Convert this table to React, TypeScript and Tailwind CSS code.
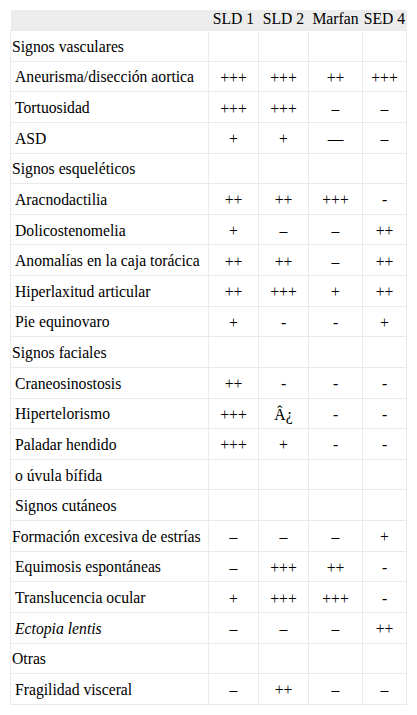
import React from "react";

type Row = { label: string; indent?: boolean; italic?: boolean; vals?: string[] };

const rows: Row[] = [
  { label: "Signos vasculares" },
  { label: "Aneurisma/disección aortica", indent: true, vals: ["+++", "+++", "++", "+++"] },
  { label: "Tortuosidad", indent: true, vals: ["+++", "+++", "–", "–"] },
  { label: "ASD", indent: true, vals: ["+", "+", "—", "–"] },
  { label: "Signos esqueléticos" },
  { label: "Aracnodactilia", indent: true, vals: ["++", "++", "+++", "-"] },
  { label: "Dolicostenomelia", indent: true, vals: ["+", "–", "–", "++"] },
  { label: "Anomalías en la caja torácica", indent: true, vals: ["++", "++", "–", "++"] },
  { label: "Hiperlaxitud articular", indent: true, vals: ["++", "+++", "+", "++"] },
  { label: "Pie equinovaro", indent: true, vals: ["+", "-", "-", "+"] },
  { label: "Signos faciales" },
  { label: "Craneosinostosis", indent: true, vals: ["++", "-", "-", "-"] },
  { label: "Hipertelorismo", indent: true, vals: ["+++", "Â¿", "-", "-"] },
  { label: "Paladar hendido", indent: true, vals: ["+++", "+", "-", "-"] },
  { label: "o úvula bífida", indent: true },
  { label: "Signos cutáneos", indent: true },
  { label: "Formación excesiva de estrías", vals: ["–", "–", "–", "+"] },
  { label: "Equimosis espontáneas", indent: true, vals: ["–", "+++", "++", "-"] },
  { label: "Translucencia ocular", indent: true, vals: ["+", "+++", "+++", "-"] },
  { label: "Ectopia lentis", indent: true, italic: true, vals: ["–", "–", "–", "++"] },
  { label: "Otras" },
  { label: "Fragilidad visceral", indent: true, vals: ["–", "++", "–", "–"] },
];

const serif = "font-['Liberation_Serif','Times_New_Roman',serif] text-[15.7px] text-black";

export default function App() {
  return (
    <div className={`bg-white min-h-[715px] pt-[10px] pl-[10px] ${serif}`}>
      <table className={`border-collapse table-fixed w-[396px] ${serif}`}>
        <colgroup>
          <col className="w-[198px]" />
          <col className="w-[50px]" />
          <col className="w-[50px]" />
          <col className="w-[54px]" />
          <col className="w-[44px]" />
        </colgroup>
        <thead>
          <tr className="bg-[#ececec] h-[20px]">
            <th className="p-0"></th>
            <th className={`pt-0 pb-[3px] px-0 font-normal text-center leading-[17px] whitespace-nowrap ${serif}`}>SLD 1</th>
            <th className={`pt-0 pb-[3px] px-0 font-normal text-center leading-[17px] whitespace-nowrap ${serif}`}>SLD 2</th>
            <th className={`pt-0 pb-[3px] px-0 font-normal text-center leading-[17px] whitespace-nowrap ${serif}`}>Marfan</th>
            <th className={`pt-0 pb-[3px] px-0 font-normal text-center leading-[17px] whitespace-nowrap ${serif}`}>SED 4</th>
          </tr>
        </thead>
        <tbody>
          {rows.map((r, i) => (
            <tr key={i} className="h-[30.64px]">
              <td className={`border border-[#ebebeb] pt-[2px] pb-0 leading-[18px] whitespace-nowrap ${serif} ${r.indent ? "pl-[4px]" : "pl-[1px]"} ${r.italic ? "italic" : ""}`}>
                {r.label}
              </td>
              {[0, 1, 2, 3].map((j) => (
                <td key={j} className={`border border-[#ebebeb] text-center pt-[3px] pb-0 px-0 leading-[18px] whitespace-nowrap ${serif}`}>
                  {r.vals ? r.vals[j] : ""}
                </td>
              ))}
            </tr>
          ))}
        </tbody>
      </table>
    </div>
  );
}
